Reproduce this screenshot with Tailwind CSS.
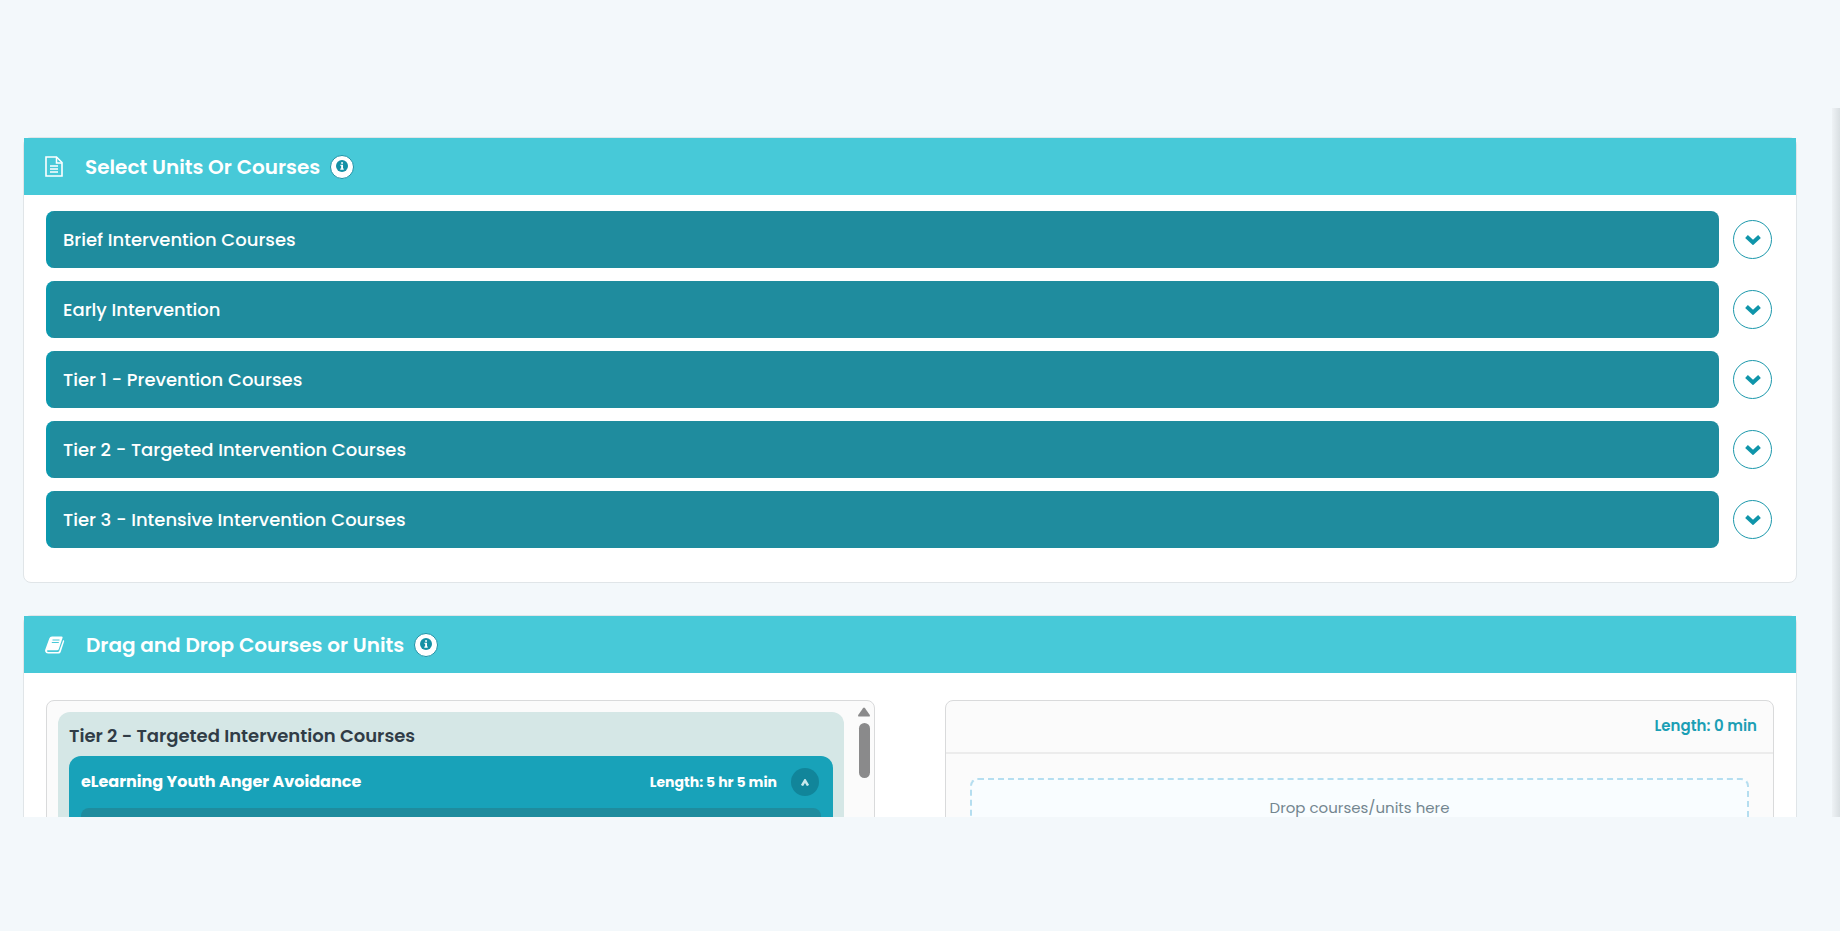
<!DOCTYPE html>
<html lang="en">
<head>
    <meta charset="UTF-8">
    <meta name="viewport" content="width=device-width, initial-scale=1.0">
    <title>Select Units Or Courses</title>
    <script src="https://cdn.jsdelivr.net/npm/@tailwindcss/browser@4"></script>
</head>
<body class="bg-[#f3f8fb] font-[Poppins,Inter,sans-serif] text-white h-screen overflow-hidden flex flex-col pt-[108px] pb-[114px]">
    <main class="relative flex-1 min-h-0 overflow-hidden pl-[23px] pr-[43px] pt-[29px]">

        <!-- Course categories -->
        <section class="bg-white border border-[#e0e5e8] rounded-lg pb-[34px]">
            <header class="bg-[#47c9d8] h-[57px] flex items-center pl-[21px]">
                <svg class="w-[18px] h-[21px]" viewBox="0 0 18 21" fill="none" stroke="currentColor" stroke-width="1.600" aria-hidden="true">
                    <path d="M1 1h10.500l5.500 5.500V20H1z"/>
                    <path d="M11.500 1v6H17M5 10h8M5 13h8M5 16h8" stroke-width="1.500"/>
                </svg>
                <h2 class="ml-[22px] text-xl font-semibold">Select Units Or Courses</h2>
                <button type="button" aria-label="About units" class="ml-2.5 size-6 rounded-full bg-white border border-[#1b93a7] text-[#1490a5] flex justify-center pt-1">
                    <svg class="size-3" viewBox="0 0 14 14" aria-hidden="true"><circle cx="7" cy="7" r="7" fill="currentColor"/><path d="M6 2.500h2.200v2H6zM5 5.500h3.200V10H9v1.300H5V10h1V6.800H5z" fill="#fff"/></svg>
                </button>
            </header>
            <ul class="pl-[22px] pr-6 pt-4 space-y-[13px]">
                <li class="flex items-center gap-3.5">
                    <div class="flex-1 h-[57px] rounded-lg bg-[#1f8c9e] border-l-4 border-[#0c98ad] flex items-center pl-[13px] text-lg font-medium">Brief Intervention Courses</div>
                    <button type="button" aria-label="Expand Brief Intervention Courses" class="size-[39px] rounded-full border border-[#1b98ab] text-[#0f95aa] flex items-center justify-center">
                        <svg class="w-4 h-2.5" viewBox="0 0 16 10" fill="none" stroke="currentColor" stroke-width="4" aria-hidden="true"><path d="M1.500 1.500L8 7.500l6.500-6"/></svg>
                    </button>
                </li>
                <li class="flex items-center gap-3.5">
                    <div class="flex-1 h-[57px] rounded-lg bg-[#1f8c9e] border-l-4 border-[#0c98ad] flex items-center pl-[13px] text-lg font-medium">Early Intervention</div>
                    <button type="button" aria-label="Expand Early Intervention" class="size-[39px] rounded-full border border-[#1b98ab] text-[#0f95aa] flex items-center justify-center">
                        <svg class="w-4 h-2.5" viewBox="0 0 16 10" fill="none" stroke="currentColor" stroke-width="4" aria-hidden="true"><path d="M1.500 1.500L8 7.500l6.500-6"/></svg>
                    </button>
                </li>
                <li class="flex items-center gap-3.5">
                    <div class="flex-1 h-[57px] rounded-lg bg-[#1f8c9e] border-l-4 border-[#0c98ad] flex items-center pl-[13px] text-lg font-medium">Tier 1 - Prevention Courses</div>
                    <button type="button" aria-label="Expand Tier 1" class="size-[39px] rounded-full border border-[#1b98ab] text-[#0f95aa] flex items-center justify-center">
                        <svg class="w-4 h-2.5" viewBox="0 0 16 10" fill="none" stroke="currentColor" stroke-width="4" aria-hidden="true"><path d="M1.500 1.500L8 7.500l6.500-6"/></svg>
                    </button>
                </li>
                <li class="flex items-center gap-3.5">
                    <div class="flex-1 h-[57px] rounded-lg bg-[#1f8c9e] border-l-4 border-[#0c98ad] flex items-center pl-[13px] text-lg font-medium">Tier 2 - Targeted Intervention Courses</div>
                    <button type="button" aria-label="Expand Tier 2" class="size-[39px] rounded-full border border-[#1b98ab] text-[#0f95aa] flex items-center justify-center">
                        <svg class="w-4 h-2.5" viewBox="0 0 16 10" fill="none" stroke="currentColor" stroke-width="4" aria-hidden="true"><path d="M1.500 1.500L8 7.500l6.500-6"/></svg>
                    </button>
                </li>
                <li class="flex items-center gap-3.5">
                    <div class="flex-1 h-[57px] rounded-lg bg-[#1f8c9e] border-l-4 border-[#0c98ad] flex items-center pl-[13px] text-lg font-medium">Tier 3 - Intensive Intervention Courses</div>
                    <button type="button" aria-label="Expand Tier 3" class="size-[39px] rounded-full border border-[#1b98ab] text-[#0f95aa] flex items-center justify-center">
                        <svg class="w-4 h-2.5" viewBox="0 0 16 10" fill="none" stroke="currentColor" stroke-width="4" aria-hidden="true"><path d="M1.500 1.500L8 7.500l6.500-6"/></svg>
                    </button>
                </li>
            </ul>
        </section>

        <!-- Drag and drop -->
        <section class="mt-8 bg-white border border-[#e0e5e8] rounded-lg">
            <header class="bg-[#47c9d8] h-[57px] flex items-center pl-[21px]">
                <svg class="w-5 h-[18px]" viewBox="0 0 20 18" aria-hidden="true">
                    <path d="M7 .5h9.500q1.500 0 1 1.500L13.800 13q-.4 1.300-1.800 1.300H2.800q-1 0-.8.900.3.800 1.300.800h9.500q1 0 1.400-1L18.200 4q1.200.500.9 1.500L15.700 16q-.5 1.600-2.200 1.600H3q-2.200 0-2.800-2-.3-1 .1-2L4.300 2.500Q5 .5 7 .5z" fill="currentColor"/>
                    <path d="M7.500 4h7M6.800 6.500h7" stroke="#47c9d8" stroke-width="1.200"/>
                </svg>
                <h2 class="ml-[21px] text-xl font-semibold">Drag and Drop Courses or Units</h2>
                <button type="button" aria-label="About drag and drop" class="ml-2.5 size-6 rounded-full bg-white border border-[#1b93a7] text-[#1490a5] flex justify-center pt-1">
                    <svg class="size-3" viewBox="0 0 14 14" aria-hidden="true"><circle cx="7" cy="7" r="7" fill="currentColor"/><path d="M6 2.500h2.200v2H6zM5 5.500h3.200V10H9v1.300H5V10h1V6.800H5z" fill="#fff"/></svg>
                </button>
            </header>
            <div class="grid grid-cols-2 gap-[70px] px-[22px] pt-[27px] pb-8">
                <div class="flex h-[400px] bg-[#fbfbfb] border border-[#d9dadb] rounded-lg overflow-hidden">
                    <div class="flex-1 mt-[11px] ml-[11px] rounded-t-xl bg-[#d5e7e6] px-[11px] pt-2.5">
                        <h3 class="h-[34px] text-lg leading-7 font-semibold text-[#303c46]">Tier 2 - Targeted Intervention Courses</h3>
                        <div class="h-[360px] rounded-t-xl bg-[#18a2b9] px-3">
                            <div class="flex items-center h-[52px]">
                                <h4 class="flex-1 text-base font-bold">eLearning Youth Anger Avoidance</h4>
                                <span class="text-sm font-bold">Length: 5 hr 5 min</span>
                                <button type="button" aria-label="Collapse course" class="ml-3.5 mr-0.5 size-7 rounded-full bg-[#11859a] flex items-center justify-center">
                                    <svg class="w-2 h-[7px]" viewBox="0 0 8 7" fill="none" stroke="#c9e8ec" stroke-width="2.500" aria-hidden="true"><path d="M1 6.500L4 1.500l3 5"/></svg>
                                </button>
                            </div>
                            <div class="h-[290px] rounded-t-lg bg-[#1f8c9e]"></div>
                        </div>
                    </div>
                    <!-- scroll track -->
                    <div class="w-[30px] flex flex-col items-end pr-1 pt-1.5">
                        <svg class="w-3 h-2.5" viewBox="0 0 12 10" fill="#8a8a8b" aria-hidden="true"><path d="M6 .5Q6.500.5 7 1.200L11.800 8Q12.200 9.500 11 9.500H1Q-.2 9.500.2 8L5 1.200Q5.500.5 6 .5z"/></svg>
                        <div class="mt-1.5 w-[11px] h-[55px] rounded-full bg-[#8a8a8b]"></div>
                    </div>
                </div>
                <div class="h-[400px] bg-[#fbfbfb] border border-[#d9dadb] rounded-lg">
                    <div class="h-[53px] border-b-2 border-[#ececec] flex items-center justify-end pr-4 text-[15px] font-semibold text-[#1c9fb5]">Length: 0 min</div>
                    <div class="mt-6 mx-6 h-[260px] rounded-lg border-2 border-dashed border-[#b5def0] bg-[#f9fdff] pt-4 text-center text-[15px] leading-6 text-[#73868f]">Drop courses/units here</div>
                </div>
            </div>
        </section>

        <div class="absolute top-0 right-0 w-2 h-full bg-linear-to-r from-[#eef2f5] to-[#d9dfe2]"></div>
    </main>
</body>
</html>
